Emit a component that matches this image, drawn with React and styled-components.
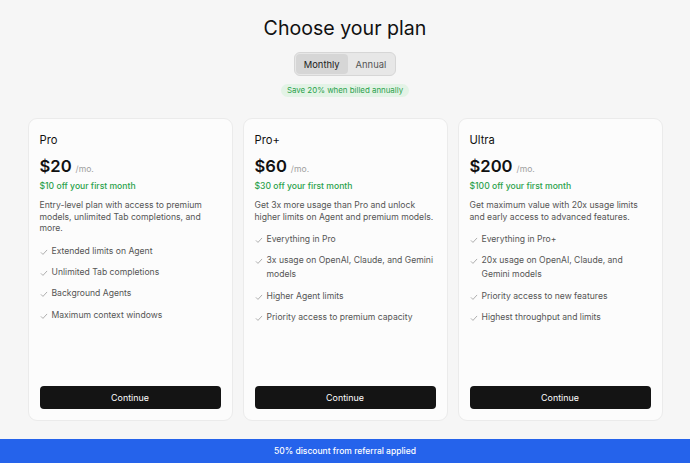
import styled, { createGlobalStyle } from "styled-components";

const plans = [
  {
    name: "Pro",
    price: "$20",
    offer: "$10 off your first month",
    desc: "Entry-level plan with access to premium models, unlimited Tab completions, and more.",
    features: [
      "Extended limits on Agent",
      "Unlimited Tab completions",
      "Background Agents",
      "Maximum context windows",
    ],
  },
  {
    name: "Pro+",
    price: "$60",
    offer: "$30 off your first month",
    desc: "Get 3x more usage than Pro and unlock higher limits on Agent and premium models.",
    features: [
      "Everything in Pro",
      "3x usage on OpenAI, Claude, and Gemini models",
      "Higher Agent limits",
      "Priority access to premium capacity",
    ],
  },
  {
    name: "Ultra",
    price: "$200",
    offer: "$100 off your first month",
    desc: "Get maximum value with 20x usage limits and early access to advanced features.",
    features: [
      "Everything in Pro+",
      "20x usage on OpenAI, Claude, and Gemini models",
      "Priority access to new features",
      "Highest throughput and limits",
    ],
  },
];

const Check = () => (
  <CheckIcon viewBox="0 0 10 10" fill="none">
    <path d="M1.5 5.8 L3.7 8 L8.5 2.8" stroke="#9a9a9a" strokeWidth="1" strokeLinecap="round" strokeLinejoin="round" />
  </CheckIcon>
);

const App = () => {
  return (
    <>
      <GlobalStyle />
      <Page>
        <Main>
          <Title>Choose your plan</Title>
          <Toggle>
            <ToggleButton $active>Monthly</ToggleButton>
            <ToggleButton>Annual</ToggleButton>
          </Toggle>
          <SaveBadge>Save 20% when billed annually</SaveBadge>
          <Cards>
            {plans.map((p) => (
              <Card key={p.name}>
                <PlanName>{p.name}</PlanName>
                <PriceRow>
                  <Price>{p.price}</Price>
                  <Per>/mo.</Per>
                </PriceRow>
                <Offer>{p.offer}</Offer>
                <Desc>{p.desc}</Desc>
                <Features>
                  {p.features.map((f) => (
                    <Feature key={f}>
                      <Check />
                      <span>{f}</span>
                    </Feature>
                  ))}
                </Features>
                <ContinueButton>Continue</ContinueButton>
              </Card>
            ))}
          </Cards>
        </Main>
        <Banner>50% discount from referral applied</Banner>
      </Page>
    </>
  );
};

export default App;

const GlobalStyle = createGlobalStyle`
  * { box-sizing: border-box; }
  body {
    margin: 0;
    background: #f6f6f6;
    font-family: Inter, "Liberation Sans", sans-serif;
    color: #111;
  }
`;

const Page = styled.div`
  display: flex;
  flex-direction: column;
  min-height: 100vh;
`;

const Main = styled.div`
  display: flex;
  flex-direction: column;
  align-items: center;
  padding-top: 14px;
`;

const Title = styled.h1`
  margin: 0;
  font-size: 19.6px;
  font-weight: 400;
  line-height: 28px;
  color: #111;
`;

const Toggle = styled.div`
  display: flex;
  margin-top: 10px;
  padding: 1px;
  background: #e7e7e7;
  border: 1px solid #d6d6d6;
  border-radius: 6px;
`;

const ToggleButton = styled.button`
  border: none;
  padding: 0 8px;
  height: 20px;
  border-radius: 4px;
  font-family: inherit;
  font-size: 9.4px;
  color: ${(p) => (p.$active ? "#222" : "#555")};
  background: ${(p) => (p.$active ? "#d6d6d6" : "transparent")};
`;

const SaveBadge = styled.div`
  margin-top: 8px;
  padding: 0 6px;
  height: 13px;
  line-height: 13px;
  border-radius: 7px;
  background: #e3f3e6;
  color: #2aa14b;
  font-size: 7.9px;
`;

const Cards = styled.div`
  display: grid;
  grid-template-columns: repeat(3, 205px);
  gap: 10px;
  margin-top: 21px;
`;

const Card = styled.div`
  display: flex;
  flex-direction: column;
  height: 303px;
  padding: 13px 11px 11px 11px;
  background: #fcfcfc;
  border: 1px solid #ebebeb;
  border-radius: 9px;
`;

const PlanName = styled.div`
  font-size: 11.2px;
  line-height: 16px;
  color: #111;
`;

const PriceRow = styled.div`
  display: flex;
  align-items: baseline;
  gap: 4px;
  margin-top: 8px;
  height: 20px;
`;

const Price = styled.span`
  font-size: 16.6px;
  font-weight: 600;
  line-height: 20px;
  color: #111;
`;

const Per = styled.span`
  font-size: 8.6px;
  color: #a0a0a0;
`;

const Offer = styled.div`
  margin-top: 4px;
  font-size: 8.6px;
  font-weight: 500;
  line-height: 12px;
  color: #2aa14b;
`;

const Desc = styled.div`
  margin-top: 8px;
  font-size: 8.62px;
  line-height: 11.6px;
  color: #555;
`;

const Features = styled.ul`
  list-style: none;
  margin: 9px 0 0 0;
  padding: 0;
  display: flex;
  flex-direction: column;
  gap: 7.3px;
`;

const Feature = styled.li`
  display: flex;
  align-items: flex-start;
  gap: 4px;
  font-size: 8.6px;
  line-height: 14px;
  color: #555;
`;

const CheckIcon = styled.svg`
  flex: none;
  width: 8px;
  height: 8px;
  margin-top: 4px;
`;

const ContinueButton = styled.button`
  margin-top: auto;
  height: 23px;
  border: none;
  border-radius: 4px;
  background: #141414;
  color: #fff;
  font-family: inherit;
  font-size: 8.9px;
  cursor: pointer;
`;

const Banner = styled.div`
  margin-top: auto;
  height: 24px;
  display: flex;
  align-items: center;
  justify-content: center;
  background: #2563eb;
  color: #fff;
  font-size: 8.5px;
  font-weight: 500;
`;
